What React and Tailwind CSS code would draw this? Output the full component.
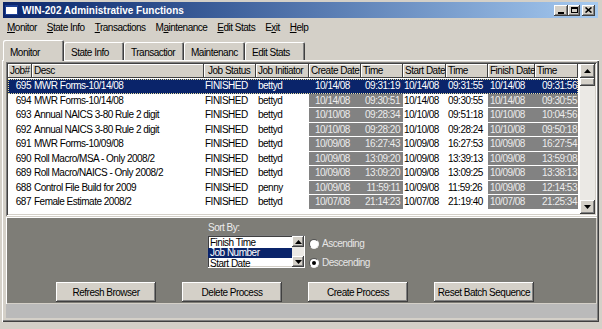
import React from "react";

const raised =
  "shadow-[inset_-1px_-1px_#404040,inset_1px_1px_#ffffff,inset_-2px_-2px_#808080,inset_2px_2px_#d4d0c8]";
const sunken =
  "shadow-[inset_1px_1px_#808080,inset_-1px_-1px_#ffffff,inset_2px_2px_#404040,inset_-2px_-2px_#d4d0c8]";

const cols = [
  { key: "job", label: "Job#", w: "w-[24px]", cell: "text-right pr-[1px]" },
  { key: "desc", label: "Desc", w: "w-[172px]", cell: "pl-[2px]" },
  { key: "status", label: "Job Status", w: "w-[52px]", cell: "pl-[1px]", head: "pl-[4px]" },
  { key: "init", label: "Job Initiator", w: "w-[53px]", cell: "pl-[2px]" },
  { key: "cd", label: "Create Date", w: "w-[52px]", cell: "pl-[6px]", gray: true },
  { key: "ct", label: "Time", w: "w-[42px]", cell: "text-right pr-[3px]", gray: true },
  { key: "sd", label: "Start Date", w: "w-[43px]", cell: "pl-[1px]" },
  { key: "st", label: "Time", w: "w-[42px]", cell: "pl-[2px]" },
  { key: "fd", label: "Finish Date", w: "w-[47px]", cell: "pl-[2px]", gray: true },
  { key: "ft", label: "Time", w: "w-[43px]", cell: "text-right pr-[1px]", gray: true },
];

const rows = [
  ["695", "MWR Forms-10/14/08", "FINISHED", "bettyd", "10/14/08", "09:31:19", "10/14/08", "09:31:55", "10/14/08", "09:31:56"],
  ["694", "MWR Forms-10/14/08", "FINISHED", "bettyd", "10/14/08", "09:30:51", "10/14/08", "09:30:55", "10/14/08", "09:30:55"],
  ["693", "Annual NAICS 3-80 Rule 2 digit", "FINISHED", "bettyd", "10/10/08", "09:28:34", "10/10/08", "09:51:18", "10/10/08", "10:04:56"],
  ["692", "Annual NAICS 3-80 Rule 2 digit", "FINISHED", "bettyd", "10/10/08", "09:28:20", "10/10/08", "09:28:24", "10/10/08", "09:50:18"],
  ["691", "MWR Forms-10/09/08", "FINISHED", "bettyd", "10/09/08", "16:27:43", "10/09/08", "16:27:53", "10/09/08", "16:27:54"],
  ["690", "Roll Macro/MSA - Only 2008/2", "FINISHED", "bettyd", "10/09/08", "13:09:20", "10/09/08", "13:39:13", "10/09/08", "13:59:08"],
  ["689", "Roll Macro/NAICS - Only 2008/2", "FINISHED", "bettyd", "10/09/08", "13:09:20", "10/09/08", "13:09:25", "10/09/08", "13:38:13"],
  ["688", "Control File Build for 2009", "FINISHED", "penny", "10/09/08", "11:59:11", "10/09/08", "11:59:26", "10/09/08", "12:14:53"],
  ["687", "Female Estimate 2008/2", "FINISHED", "bettyd", "10/07/08", "21:14:23", "10/07/08", "21:19:40", "10/07/08", "21:25:34"],
];

function Arrow({ up, size = 7 }) {
  return (
    <svg width={size} height={4} viewBox="0 0 7 4">
      {up ? <path d="M3.5 0L7 4H0z" fill="#000" /> : <path d="M0 0h7L3.5 4z" fill="#000" />}
    </svg>
  );
}

function TitleBar() {
  return (
    <div className="h-[16px] mx-[1px] flex items-center bg-linear-to-r from-[#0a246a] to-[#a6caf0]">
      <div className="ml-[2px] w-[13px] h-[10px] bg-white border-t-[2px] border-[#1c3f94] border-x border-b" />
      <span className="ml-[4px] text-white font-bold tracking-normal text-[10px]">
        WIN-202 Administrative Functions
      </span>
      <div className="ml-auto mr-[3px] flex items-center">
        <div className={`w-[14px] h-[11px] bg-[#d4d0c8] ${raised} flex items-end justify-center pb-[2px]`}>
          <div className="w-[6px] h-[2px] bg-black" />
        </div>
        <div className={`w-[12px] h-[11px] bg-[#d4d0c8] ${raised} flex items-center justify-center`}>
          <div className="w-[7px] h-[6px] border border-black border-t-2" />
        </div>
        <div className={`ml-[2px] w-[13px] h-[11px] bg-[#d4d0c8] ${raised} flex items-center justify-center`}>
          <svg width="7" height="6" viewBox="0 0 7 6">
            <path d="M0.5 0.5l6 5M6.5 0.5l-6 5" stroke="#000" strokeWidth="1.6" />
          </svg>
        </div>
      </div>
    </div>
  );
}

function MenuBar() {
  return (
    <div className="h-[19px] flex items-center gap-[10px] pl-[5px]">
      <span><u>M</u>onitor</span>
      <span><u>S</u>tate Info</span>
      <span><u>T</u>ransactions</span>
      <span>M<u>a</u>intenance</span>
      <span><u>E</u>dit Stats</span>
      <span>E<u>x</u>it</span>
      <span><u>H</u>elp</span>
    </div>
  );
}

function Tabs() {
  const tabs = [
    ["Monitor", "w-[61px]"],
    ["State Info", "w-[60px]"],
    ["Transactior", "w-[60px]"],
    ["Maintenanc", "w-[61px]"],
    ["Edit Stats", "w-[60px]"],
  ];
  return (
    <div className="h-[20px] mt-[3px] flex items-end pl-[1px] relative z-10">
      {tabs.map(([t, w], i) => (
        <div
          key={t}
          className={`${w} ${i === 0 ? "h-[21px] -mb-px pt-[5px]" : "h-[18px] pt-[3px]"} bg-[#d4d0c8] rounded-t-[2px] shadow-[inset_1px_1px_#ffffff,inset_-1px_0_#404040,inset_-2px_0_#808080] pl-[7px] whitespace-nowrap`}
        >
          {t}
        </div>
      ))}
    </div>
  );
}

function Grid() {
  return (
    <div className={`h-[154px] bg-white p-[2px] ${sunken} flex`}>
      <div className="flex-1 flex flex-col">
        <div className="h-[14px] flex">
          {cols.map((c) => (
            <div
              key={c.key}
              className={`${c.w} h-[14px] bg-[#d4d0c8] shadow-[inset_-1px_-1px_#404040,inset_1px_1px_#ffffff] ${c.head || "pl-[2px]"} leading-[14px] whitespace-nowrap overflow-hidden`}
            >
              {c.label}
            </div>
          ))}
        </div>
        <div className="h-px" />
        {rows.map((r, ri) => {
          const sel = ri === 0;
          return (
            <div
              key={r[0]}
              className={`h-[14.5px] flex w-[570px] ${sel ? "bg-[#0a246a] text-white outline outline-dotted outline-[#e5dc9c] -outline-offset-1" : ""}`}
            >
              {cols.map((c, ci) => (
                <div
                  key={c.key}
                  className={`${c.w} ${c.cell} leading-[14px] whitespace-nowrap overflow-hidden ${
                    !sel && c.gray ? "bg-[#828282] text-[#ececec] border-b border-white" : ""
                  }`}
                >
                  {r[ci]}
                </div>
              ))}
            </div>
          );
        })}
      </div>
      <div className="w-[15px] flex flex-col bg-[#ebe9e5]">
        <div className={`h-[14px] bg-[#d4d0c8] ${raised} flex items-center justify-center`}>
          <Arrow up />
        </div>
        <div className={`h-[8px] bg-[#d4d0c8] ${raised}`} />
        <div className="flex-1" />
        <div className={`h-[14px] bg-[#d4d0c8] ${raised} flex items-center justify-center`}>
          <Arrow />
        </div>
      </div>
    </div>
  );
}

function Radio({ label, checked }) {
  return (
    <div className="flex items-center h-[19px]">
      <div className="w-[10px] h-[10px] rounded-full bg-white border border-t-[#505050] border-l-[#505050] border-b-[#f0f0f0] border-r-[#f0f0f0] flex items-center justify-center">
        {checked && <div className="w-[4px] h-[4px] rounded-full bg-black" />}
      </div>
      <span className="ml-[3px] text-[#e6e6e6]">{label}</span>
    </div>
  );
}

function SortPanel() {
  const buttons = ["Refresh Browser", "Delete Process", "Create Process", "Reset Batch Sequence"];
  return (
    <div className="h-[87px] mt-px bg-[#7e7d77] shadow-[inset_1px_1px_#ffffff,inset_-1px_-1px_#d4d0c8] flex flex-col">
      <div className="flex pl-[201px] pt-[6px]">
        <div className="flex flex-col">
          <div className="text-[#ececec] h-[12px] leading-[10px] pl-px">Sort By:</div>
          <div className={`w-[98px] h-[33px] bg-white ${sunken} p-[1px] flex`}>
            <div className="flex-1 flex flex-col pt-px">
              <div className="h-[11px] leading-[11px] pl-[2px]">Finish Time</div>
              <div className="h-[10px] leading-[10px] pl-[2px] bg-[#0a246a] text-white">Job Number</div>
              <div className="h-[11px] leading-[11px] pl-[2px]">Start Date</div>
            </div>
            <div className="w-[12px] flex flex-col bg-[#ebe9e5]">
              <div className={`h-[11px] bg-[#d4d0c8] ${raised} flex items-center justify-center`}>
                <Arrow up />
              </div>
              <div className="flex-1" />
              <div className={`h-[11px] bg-[#d4d0c8] ${raised} flex items-center justify-center`}>
                <Arrow />
              </div>
            </div>
          </div>
        </div>
        <div className="flex flex-col ml-[4px] pt-[11px]">
          <Radio label="Ascending" />
          <Radio label="Descending" checked />
        </div>
      </div>
      <div className="flex gap-[26px] pl-[50px] mt-[10px]">
        {buttons.map((b) => (
          <div
            key={b}
            className={`w-[100px] h-[20px] bg-[#d4d0c8] ${raised} flex items-center justify-center`}
          >
            {b}
          </div>
        ))}
      </div>
    </div>
  );
}

export default function App() {
  return (
    <div className="w-[602px] h-[329px] bg-[#d4d0c8] overflow-hidden pt-[2px] pl-[2px] pr-[3px] flex flex-col font-['Liberation_Sans',Arial,sans-serif] text-[10px] tracking-[-0.5px] text-black">
      <TitleBar />
      <MenuBar />
      <Tabs />
      <div className="h-[262px] bg-[#d4d0c8] shadow-[inset_1px_1px_#ffffff,inset_-1px_-1px_#404040,inset_-2px_-2px_#808080] pt-[2px] pl-[4px] pr-[2px] flex flex-col">
        <Grid />
        <SortPanel />
        <div className="h-[14px] bg-[#bababa]" />
      </div>
    </div>
  );
}
